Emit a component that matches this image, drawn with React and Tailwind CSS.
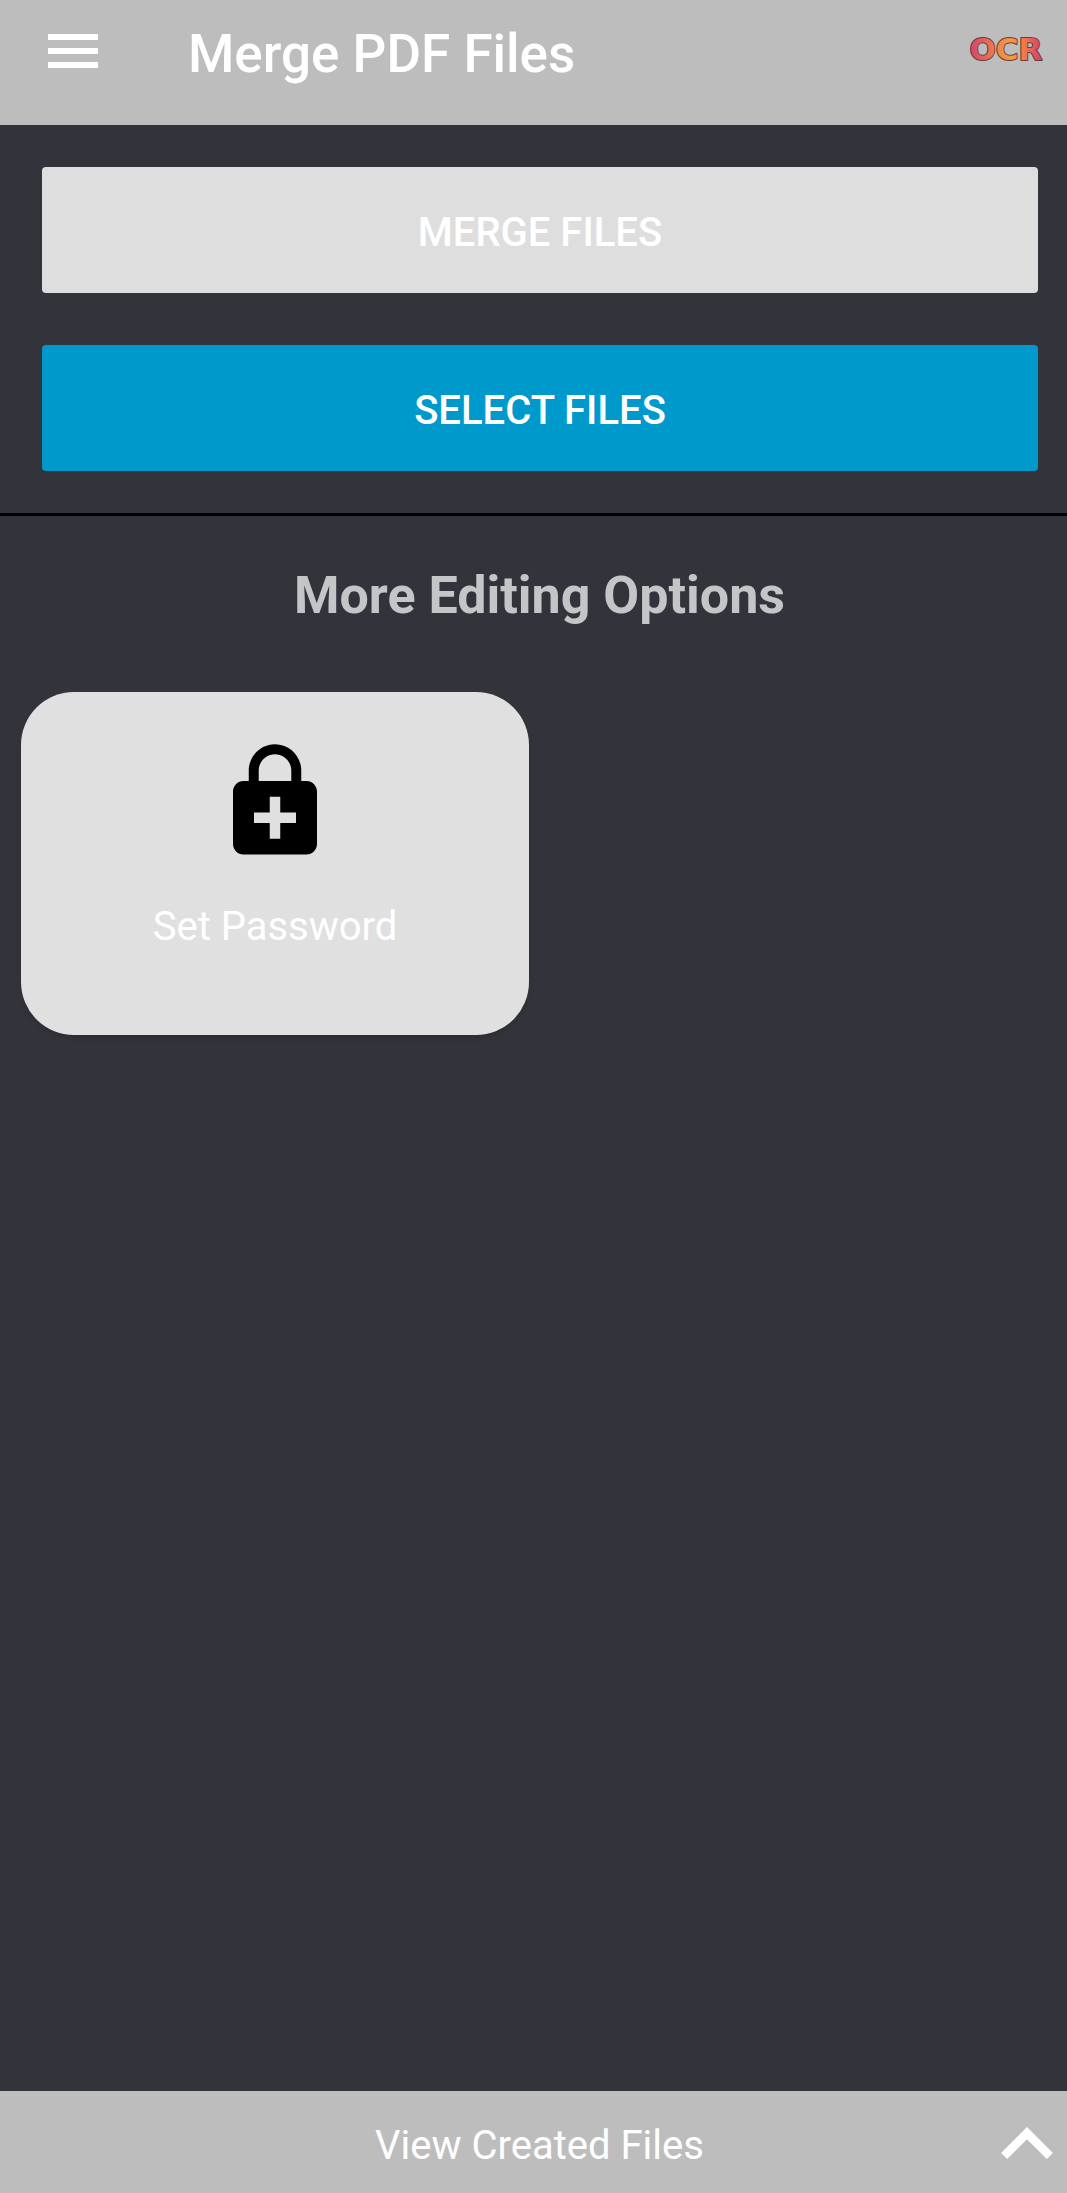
import React from "react";

function MenuIcon() {
  return (
    <svg viewBox="0 0 50 34" className="h-[34px] w-[50px]" fill="currentColor" aria-hidden="true">
      <path d="M0 0h50v6H0zM0 14h50v6H0zM0 28h50v6H0z" />
    </svg>
  );
}

function OcrLogo() {
  return (
    <svg viewBox="0 0 84 40" className="h-10 w-[84px]" role="img" aria-label="OCR">
      <defs>
        <linearGradient id="ocr-fill" gradientUnits="userSpaceOnUse" x1="5" y1="20" x2="79" y2="20">
          <stop offset="0" stopColor="#d6416f" />
          <stop offset="0.22" stopColor="#e0685a" />
          <stop offset="0.42" stopColor="#f08b42" />
          <stop offset="0.58" stopColor="#f39a3e" />
          <stop offset="0.76" stopColor="#ee7845" />
          <stop offset="1" stopColor="#cf3a74" />
        </linearGradient>
      </defs>
      <g fontFamily="'DejaVu Sans', sans-serif" fontWeight="700" fontSize="31" textAnchor="middle">
        <text
          x="42"
          y="31"
          fill="url(#ocr-fill)"
          stroke="#6b3a3c"
          strokeWidth="2"
          strokeLinejoin="round"
          paintOrder="stroke"
        >
          OCR
        </text>
      </g>
    </svg>
  );
}

function LockPlusIcon() {
  return (
    <svg viewBox="0 0 24 24" className="size-[126px]" fill="currentColor" aria-hidden="true">
      <path
        fillRule="evenodd"
        d="M18 8h-1V6c0-2.76-2.24-5-5-5S7 3.24 7 6v2H6c-1.1 0-2 .9-2 2v10c0 1.100.9 2 2 2h12c1.100 0 2-.9 2-2V10c0-1.100-.9-2-2-2zM8.900 6c0-1.710 1.390-3.100 3.100-3.100s3.100 1.390 3.100 3.100v2H8.900V6zM16 16h-3v3h-2v-3H8v-2h3v-3h2v3h3v2z"
      />
    </svg>
  );
}

function ChevronUpIcon() {
  return (
    <svg viewBox="6 8 12 7.410" className="h-8 w-[52px]" fill="currentColor" aria-hidden="true">
      <path d="M12 8l-6 6 1.410 1.410L12 10.830l4.590 4.580L18 14z" />
    </svg>
  );
}

export default function App() {
  return (
    <div className="flex min-h-screen flex-col bg-[#33333b] font-['Roboto',sans-serif] text-white">
      <header className="flex h-[125px] items-start bg-[#bdbdbd] pr-[19px] pl-12">
        <button type="button" aria-label="Open menu" className="mt-[34px]">
          <MenuIcon />
        </button>
        <h1 className="mt-[23px] ml-[90px] text-[53px] leading-[62px] font-medium">Merge PDF Files</h1>
        <button type="button" className="mt-[29px] ml-auto">
          <OcrLogo />
        </button>
      </header>

      <main className="flex flex-1 flex-col">
        <section className="flex flex-col gap-[52px] border-b-3 border-black pt-[42px] pr-[29px] pb-[42px] pl-[42px]">
          <button type="button" className="h-[126px] rounded bg-[#dedede] pt-[6px] text-[40px] leading-12 font-medium">
            MERGE FILES
          </button>
          <button type="button" className="h-[126px] rounded bg-[#0099cc] pt-[6px] text-[40px] leading-12 font-medium">
            SELECT FILES
          </button>
        </section>

        <h2 className="mt-[49px] pl-3 text-center text-[52px] leading-[62px] font-bold text-[#c4c5c7]">
          More Editing Options
        </h2>

        <div className="mt-[65px] grid grid-cols-2 gap-5 pr-[10px] pl-[21px]">
          <button
            type="button"
            className="flex h-[343px] flex-col items-center rounded-[53px] bg-[#e0e0e0] pt-[47px] shadow-md"
          >
            <span className="text-black">
              <LockPlusIcon />
            </span>
            <span className="mt-[38px] text-[40px] leading-12">Set Password</span>
          </button>
        </div>
      </main>

      <footer>
        <button
          type="button"
          className="grid h-[102px] w-full grid-cols-[1fr_auto_1fr] items-center bg-[#bdbdbd] pr-[14px] pl-[26px]"
        >
          <span className="col-start-2 pt-2 text-[40px] leading-12">View Created Files</span>
          <span className="justify-self-end pt-[2px]">
            <ChevronUpIcon />
          </span>
        </button>
      </footer>
    </div>
  );
}
